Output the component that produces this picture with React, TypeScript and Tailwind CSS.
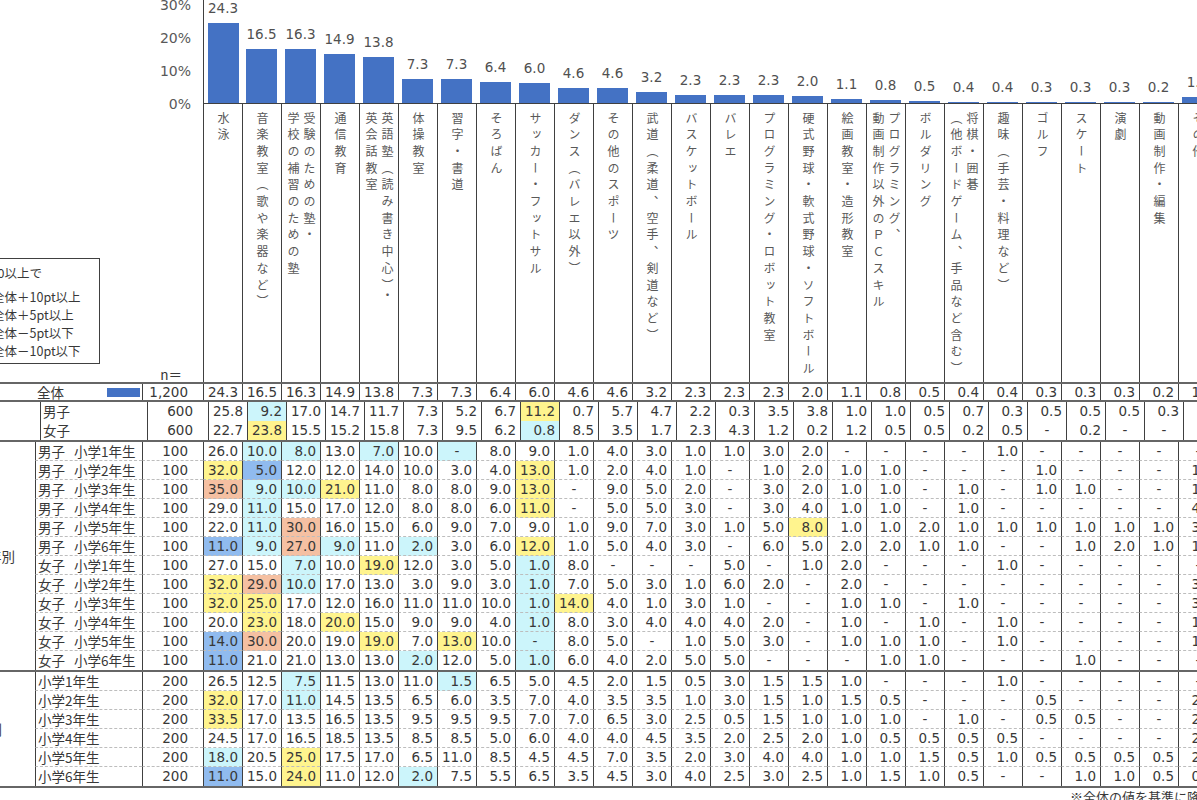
import React from 'react';

const NUM = "font-['DejaVu_Sans','Noto_Sans_CJK_JP',sans-serif]";
const JP = "font-['Noto_Sans_CJK_JP',sans-serif]";

const COLS: { label: string[]; v: number }[] = [
  { label: ['水泳'], v: 24.3 },
  { label: ['音楽教室（歌や楽器など）'], v: 16.5 },
  { label: ['受験のための塾・', '学校の補習のための塾'], v: 16.3 },
  { label: ['通信教育'], v: 14.9 },
  { label: ['英語塾（読み書き中心）・', '英会話教室'], v: 13.8 },
  { label: ['体操教室'], v: 7.3 },
  { label: ['習字・書道'], v: 7.3 },
  { label: ['そろばん'], v: 6.4 },
  { label: ['サッカー・フットサル'], v: 6.0 },
  { label: ['ダンス（バレエ以外）'], v: 4.6 },
  { label: ['その他のスポーツ'], v: 4.6 },
  { label: ['武道（柔道、空手、剣道など）'], v: 3.2 },
  { label: ['バスケットボール'], v: 2.3 },
  { label: ['バレエ'], v: 2.3 },
  { label: ['プログラミング・ロボット教室'], v: 2.3 },
  { label: ['硬式野球・軟式野球・ソフトボール'], v: 2.0 },
  { label: ['絵画教室・造形教室'], v: 1.1 },
  { label: ['プログラミング、', '動画制作以外のＰＣスキル'], v: 0.8 },
  { label: ['ボルダリング'], v: 0.5 },
  { label: ['将棋・囲碁', '（他ボードゲーム、手品など含む）'], v: 0.4 },
  { label: ['趣味（手芸・料理など）'], v: 0.4 },
  { label: ['ゴルフ'], v: 0.3 },
  { label: ['スケート'], v: 0.3 },
  { label: ['演劇'], v: 0.3 },
  { label: ['動画制作・編集'], v: 0.2 },
  { label: ['その他'], v: 1.7 },
];

const TOTAL = COLS.map((c) => c.v);

type Row = { a: string; b?: string; n: string; vals: string };

const S1: Row[] = [
  { a: '男子', n: '600', vals: '25.8 9.2 17.0 14.7 11.7 7.3 5.2 6.7 11.2 0.7 5.7 4.7 2.2 0.3 3.5 3.8 1.0 1.0 0.5 0.7 0.3 0.5 0.5 0.5 0.3 1.8' },
  { a: '女子', n: '600', vals: '22.7 23.8 15.5 15.2 15.8 7.3 9.5 6.2 0.8 8.5 3.5 1.7 2.3 4.3 1.2 0.2 1.2 0.5 0.5 0.2 0.5 - 0.2 - - 1.5' },
];

const S2: Row[] = [
  { a: '男子', b: '小学1年生', n: '100', vals: '26.0 10.0 8.0 13.0 7.0 10.0 - 8.0 9.0 1.0 4.0 3.0 1.0 1.0 3.0 2.0 - - - - 1.0 - - - - -' },
  { a: '男子', b: '小学2年生', n: '100', vals: '32.0 5.0 12.0 12.0 14.0 10.0 3.0 4.0 13.0 1.0 2.0 4.0 1.0 - 1.0 2.0 1.0 1.0 - - - 1.0 - - - 1.0' },
  { a: '男子', b: '小学3年生', n: '100', vals: '35.0 9.0 10.0 21.0 11.0 8.0 8.0 9.0 13.0 - 9.0 5.0 2.0 - 3.0 2.0 1.0 1.0 - 1.0 - 1.0 1.0 - - 1.0' },
  { a: '男子', b: '小学4年生', n: '100', vals: '29.0 11.0 15.0 17.0 12.0 8.0 8.0 6.0 11.0 - 5.0 5.0 3.0 - 3.0 4.0 1.0 1.0 - 1.0 - - - - - 4.0' },
  { a: '男子', b: '小学5年生', n: '100', vals: '22.0 11.0 30.0 16.0 15.0 6.0 9.0 7.0 9.0 1.0 9.0 7.0 3.0 1.0 5.0 8.0 1.0 1.0 2.0 1.0 1.0 1.0 1.0 1.0 1.0 3.0' },
  { a: '男子', b: '小学6年生', n: '100', vals: '11.0 9.0 27.0 9.0 11.0 2.0 3.0 6.0 12.0 1.0 5.0 4.0 3.0 - 6.0 5.0 2.0 2.0 1.0 1.0 - - 1.0 2.0 1.0 1.0' },
  { a: '女子', b: '小学1年生', n: '100', vals: '27.0 15.0 7.0 10.0 19.0 12.0 3.0 5.0 1.0 8.0 - - - 5.0 - 1.0 2.0 - - - 1.0 - - - - -' },
  { a: '女子', b: '小学2年生', n: '100', vals: '32.0 29.0 10.0 17.0 13.0 3.0 9.0 3.0 1.0 7.0 5.0 3.0 1.0 6.0 2.0 - 2.0 - - - - - - - - 3.0' },
  { a: '女子', b: '小学3年生', n: '100', vals: '32.0 25.0 17.0 12.0 16.0 11.0 11.0 10.0 1.0 14.0 4.0 1.0 3.0 1.0 - - 1.0 1.0 - 1.0 - - - - - 3.0' },
  { a: '女子', b: '小学4年生', n: '100', vals: '20.0 23.0 18.0 20.0 15.0 9.0 9.0 4.0 1.0 8.0 3.0 4.0 4.0 4.0 2.0 - 1.0 - 1.0 - 1.0 - - - - 1.0' },
  { a: '女子', b: '小学5年生', n: '100', vals: '14.0 30.0 20.0 19.0 19.0 7.0 13.0 10.0 - 8.0 5.0 - 1.0 5.0 3.0 - 1.0 1.0 1.0 - 1.0 - - - - 1.0' },
  { a: '女子', b: '小学6年生', n: '100', vals: '11.0 21.0 21.0 13.0 13.0 2.0 12.0 5.0 1.0 6.0 4.0 2.0 5.0 5.0 - - - 1.0 1.0 - - - 1.0 - - -' },
];

const S3: Row[] = [
  { a: '小学1年生', n: '200', vals: '26.5 12.5 7.5 11.5 13.0 11.0 1.5 6.5 5.0 4.5 2.0 1.5 0.5 3.0 1.5 1.5 1.0 - - - 1.0 - - - - -' },
  { a: '小学2年生', n: '200', vals: '32.0 17.0 11.0 14.5 13.5 6.5 6.0 3.5 7.0 4.0 3.5 3.5 1.0 3.0 1.5 1.0 1.5 0.5 - - - 0.5 - - - 2.0' },
  { a: '小学3年生', n: '200', vals: '33.5 17.0 13.5 16.5 13.5 9.5 9.5 9.5 7.0 7.0 6.5 3.0 2.5 0.5 1.5 1.0 1.0 1.0 - 1.0 - 0.5 0.5 - - 2.0' },
  { a: '小学4年生', n: '200', vals: '24.5 17.0 16.5 18.5 13.5 8.5 8.5 5.0 6.0 4.0 4.0 4.5 3.5 2.0 2.5 2.0 1.0 0.5 0.5 0.5 0.5 - - - - 2.0' },
  { a: '小学5年生', n: '200', vals: '18.0 20.5 25.0 17.5 17.0 6.5 11.0 8.5 4.5 4.5 7.0 3.5 2.0 3.0 4.0 4.0 1.0 1.0 1.5 0.5 1.0 0.5 0.5 0.5 0.5 2.0' },
  { a: '小学6年生', n: '200', vals: '11.0 15.0 24.0 11.0 12.0 2.0 7.5 5.5 6.5 3.5 4.5 3.0 4.0 2.5 3.0 2.5 1.0 1.5 1.0 0.5 - - 1.0 1.0 0.5 0.5' },
];

function bg(v: string, t: number) {
  const x = v === '-' ? 0 : parseFloat(v);
  const d = x - t;
  if (d >= 9.95) return 'bg-[#f5c0a2]';
  if (d >= 4.95) return 'bg-[#fff48e]';
  if (d <= -9.95) return 'bg-[#90bbef]';
  if (d <= -4.95) return 'bg-[#ccf5fb]';
  return '';
}

function DataRow({ row, dashed }: { row: Row; dashed: boolean }) {
  const arr = row.vals.split(' ');
  const dash = dashed ? '[border-bottom:1px_dashed_#bdbdbd]' : '';
  return (
    <div className="flex h-[19px] text-[#383838]">
      <div className={`w-[107px] shrink-0 border-l border-l-[#404040] pl-[2px] leading-[18px] ${JP} text-[13.5px] whitespace-nowrap flex ${dash}`}>
        <span>{row.a}</span>
        {row.b && <span className="inline-block w-[9px]" />}
        {row.b && <span>{row.b}</span>}
      </div>
      <div className={`w-[61px] shrink-0 border-l border-l-[#404040] text-right pr-[15px] leading-[18px] ${NUM} text-[13.5px] ${dash}`}>{row.n}</div>
      {arr.map((v, i) => (
        <div
          key={i}
          className={`w-[39px] shrink-0 border-l border-l-[#404040] leading-[18px] whitespace-nowrap ${NUM} text-[13.5px] ${v === '-' ? 'text-center' : 'text-right pr-[4px]'} ${bg(v, TOTAL[i])} ${dash}`}
        >
          {v}
        </div>
      ))}
    </div>
  );
}

function Section({ rows, group, groupPad, dashed, last }: { rows: Row[]; group: string; groupPad: string; dashed: boolean; last?: boolean }) {
  return (
    <div className={`flex border-t-2 border-t-[#666] ${last ? 'border-b-2 border-b-[#666]' : ''}`}>
      <div className={`w-[35px] shrink-0 flex items-center justify-end whitespace-nowrap ${JP} text-[13.5px] text-[#383838] ${groupPad}`}>
        <span className="shrink-0">{group}</span>
      </div>
      <div className="flex flex-col">
        {rows.map((r, i) => (
          <DataRow key={i} row={r} dashed={dashed && i < rows.length - 1} />
        ))}
      </div>
    </div>
  );
}

const LEGEND = [
  { c: 'bg-[#f5c0a2]', t: '全体＋10pt以上' },
  { c: 'bg-[#fff48e]', t: '全体＋5pt以上' },
  { c: 'bg-[#ccf5fb]', t: '全体－5pt以下' },
  { c: 'bg-[#90bbef]', t: '全体－10pt以下' },
];

export default function App() {
  return (
    <div className="w-[1197px] h-[800px] overflow-hidden relative bg-white">
      {/* Chart and column headers */}
      <div className="flex h-[382px]">
        <div className="w-[203px] shrink-0 flex flex-col">
          <div className="h-[104px]">
            <div className={`-mt-[11.5px] flex flex-col ${NUM} text-[14px] text-[#595959]`}>
              {['30%', '20%', '10%', '0%'].map((l) => (
                <div key={l} className="h-[33px] leading-[33px] text-right pr-[12px]">
                  {l}
                </div>
              ))}
            </div>
          </div>
          <div className="flex-1 flex items-end justify-end pr-[21px]">
            <span className={`${JP} text-[13.5px] leading-[16px] text-[#383838]`}>n＝</span>
          </div>
        </div>
        {COLS.map((c, i) => (
          <div key={i} className="w-[39px] shrink-0 flex flex-col">
            <div className={`h-[104px] flex flex-col justify-end items-center border-b border-b-[#404040] ${i === 0 ? 'border-l border-l-[#404040]' : ''}`}>
              <div className={`${NUM} text-[13.5px] leading-[16px] mb-[7px] text-[#505050] whitespace-nowrap`}>{c.v.toFixed(1)}</div>
              <div className="w-[31px] bg-[#4472c4] shrink-0" style={{ height: `${c.v * 3.3}px` }} />
            </div>
            <div className="flex-1 border-l border-l-[#404040] flex justify-center pt-[8px] overflow-hidden">
              <div className={`[writing-mode:vertical-rl] ${JP} text-[12px] leading-[16px] tracking-[4.7px] text-[#595959] whitespace-nowrap`}>
                {c.label.map((l, j) => (
                  <React.Fragment key={j}>
                    {j > 0 && <br />}
                    {l}
                  </React.Fragment>
                ))}
              </div>
            </div>
          </div>
        ))}
      </div>

      {/* Legend */}
      <div className={`absolute left-[-62px] top-[258px] w-[162px] h-[106px] border border-[#404040] bg-white ${JP} text-[12.5px] text-[#383838] pt-[5px]`}>
        <div className="h-[18px] leading-[18px] pl-[37px] whitespace-nowrap">n=30以上で</div>
        <div className="mt-[6px] flex flex-col">
          {LEGEND.map((it) => (
            <div key={it.t} className="h-[18px] leading-[18px] flex items-center whitespace-nowrap">
              <span className={`w-[20px] h-[11px] ml-[24px] mr-[9px] shrink-0 ${it.c}`} />
              <span>{it.t}</span>
            </div>
          ))}
        </div>
      </div>

      {/* Total row */}
      <div className="flex h-[18px] border-t-2 border-t-[#666] text-[#383838]">
        <div className="w-[142px] shrink-0 flex items-center">
          <span className={`pl-[37px] ${JP} text-[13.5px] leading-[16px]`}>全体</span>
          <span className="ml-auto mr-[2px] w-[33px] h-[9px] bg-[#4472c4]" />
        </div>
        <div className={`w-[61px] shrink-0 border-l border-l-[#404040] text-right pr-[15px] leading-[16px] ${NUM} text-[13.5px]`}>1,200</div>
        {TOTAL.map((v, i) => (
          <div key={i} className={`w-[39px] shrink-0 border-l border-l-[#404040] text-right pr-[4px] leading-[16px] whitespace-nowrap ${NUM} text-[13.5px]`}>
            {v.toFixed(1)}
          </div>
        ))}
      </div>

      <Section rows={S1} group="性別" groupPad="pr-[40px]" dashed={false} />
      <Section rows={S2} group="性・学年別" groupPad="pr-[20px]" dashed={true} />
      <Section rows={S3} group="学年別" groupPad="pr-[33px]" dashed={true} last />

      <div className={`pl-[1070px] mt-[1px] ${JP} text-[13px] leading-[16px] text-[#383838] whitespace-nowrap`}>※全体の値を基準に降順で並び替え</div>
    </div>
  );
}
